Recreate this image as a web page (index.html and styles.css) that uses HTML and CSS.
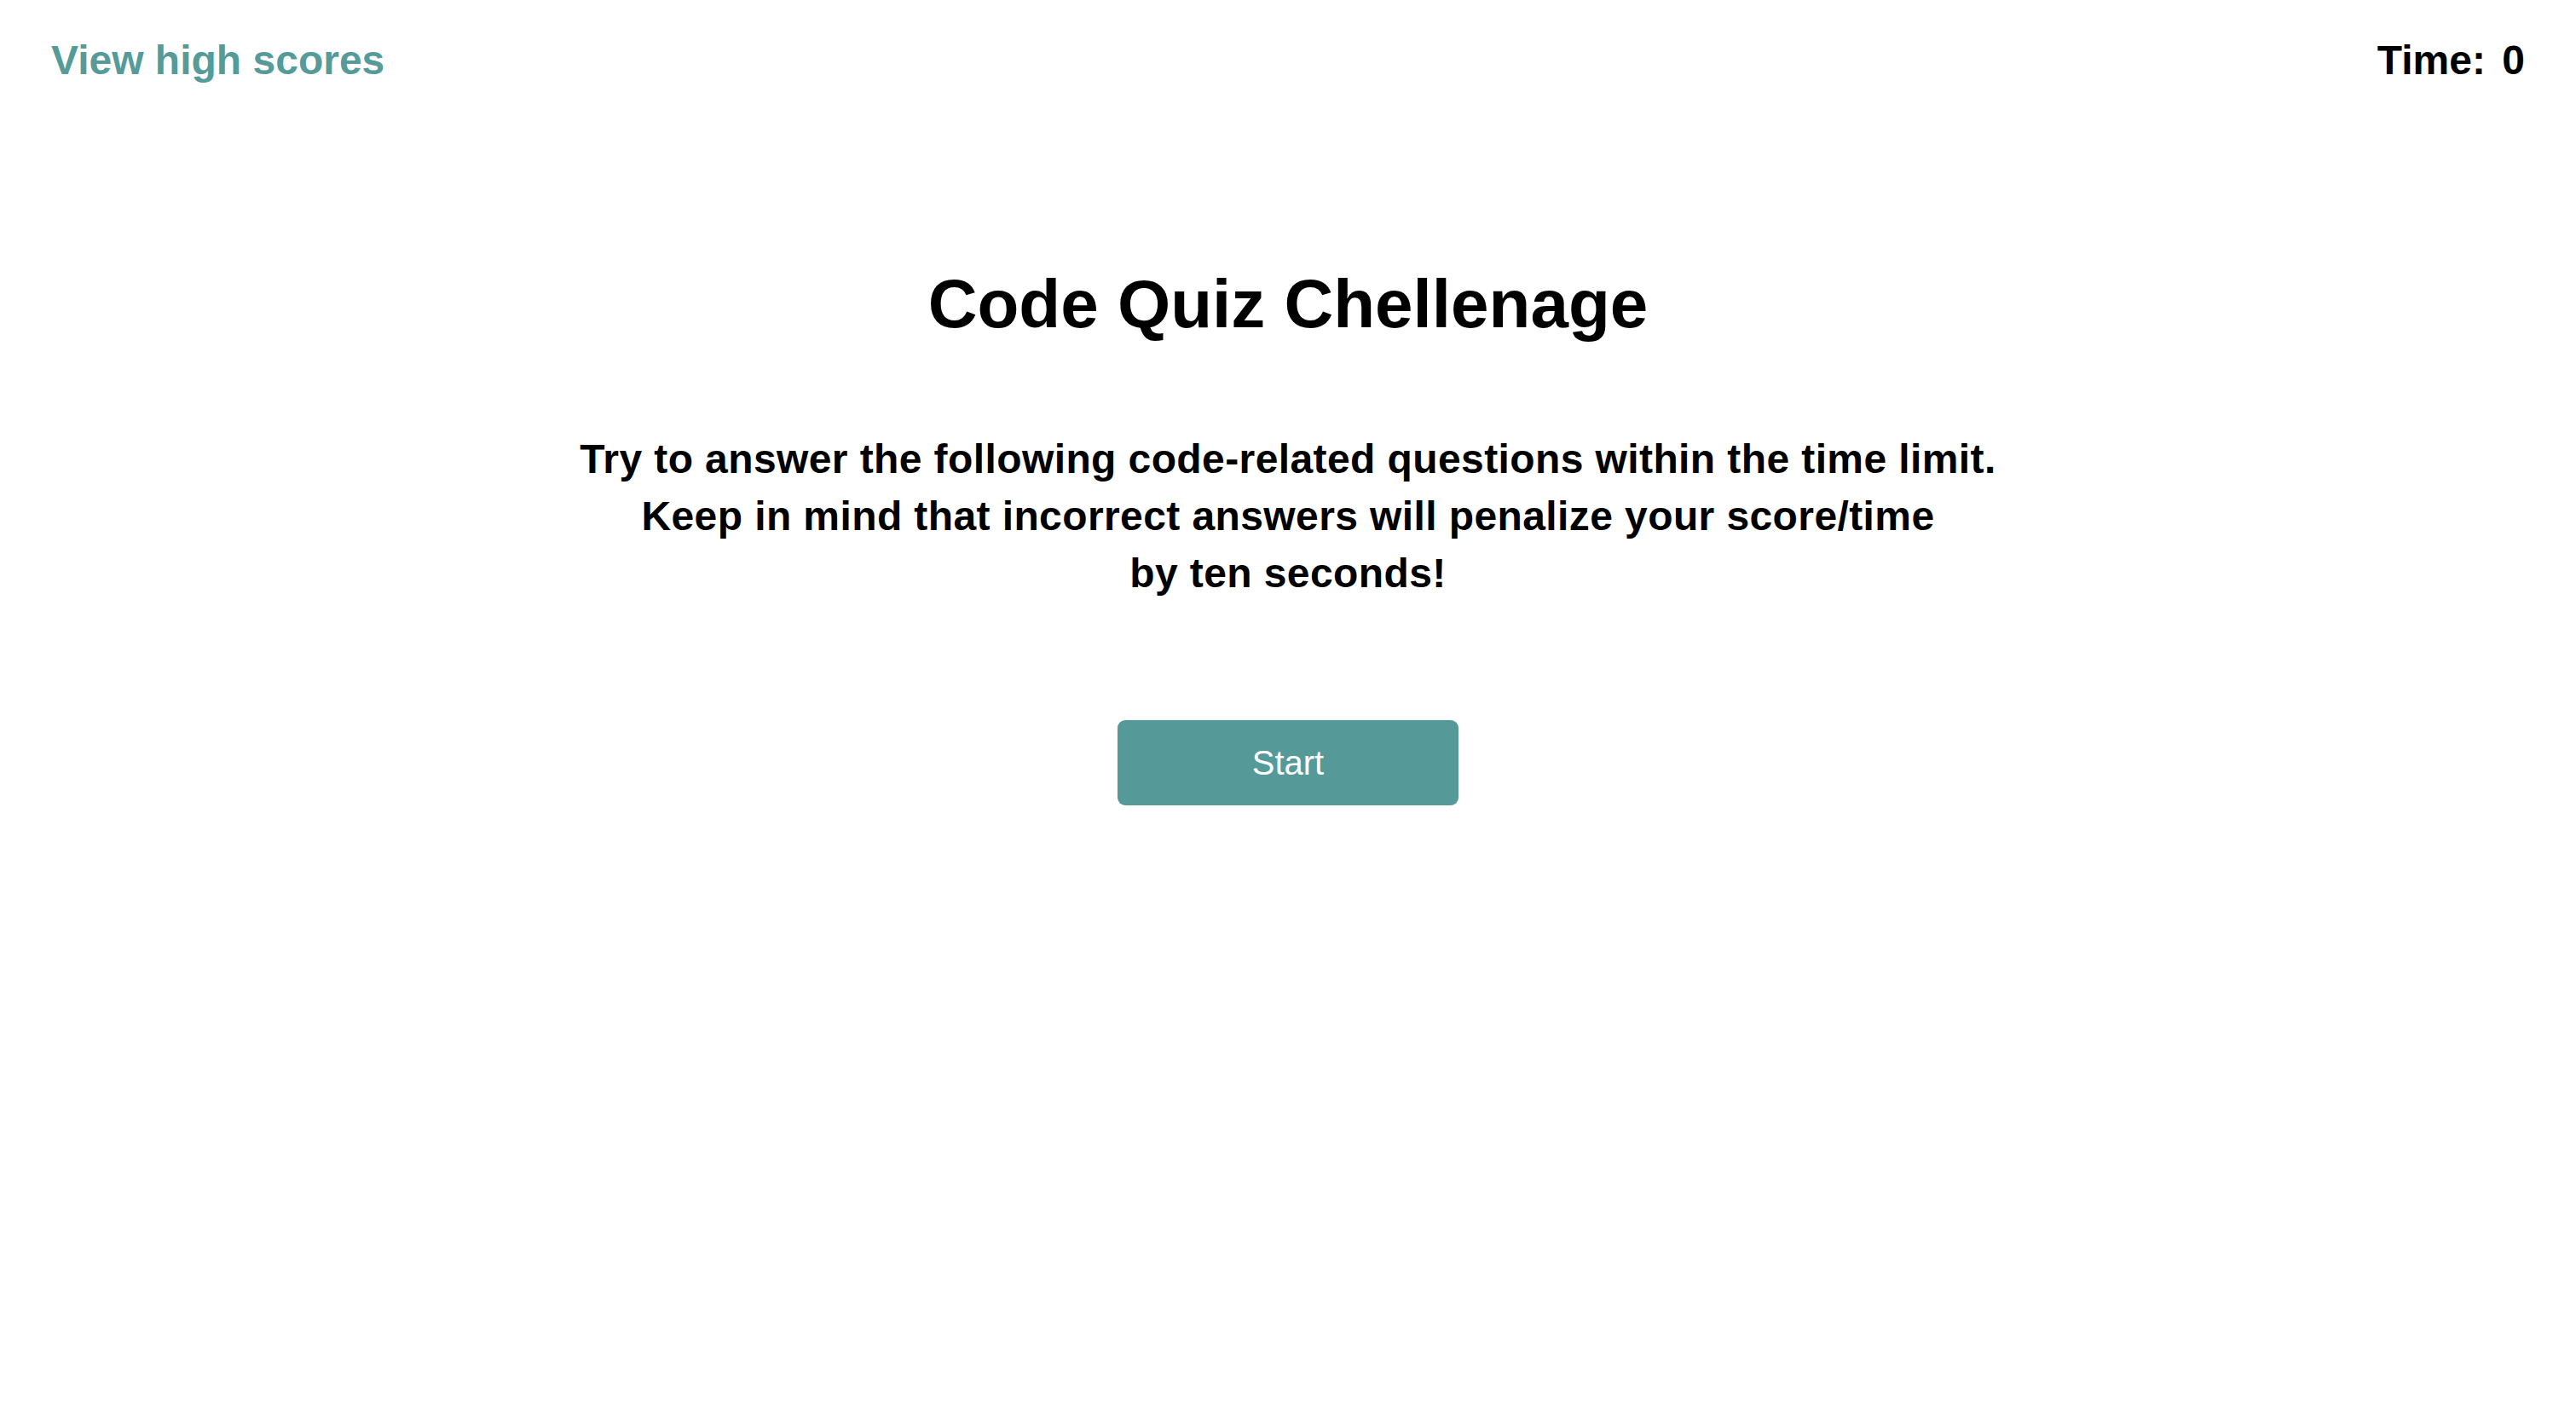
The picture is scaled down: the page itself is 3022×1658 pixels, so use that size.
FILE: index.html
```html
<!DOCTYPE html>
<html lang="en">
<head>
<meta charset="utf-8">
<title>Code Quiz</title>
<link rel="stylesheet" href="styles.css">
</head>
<body>
<header class="topbar">
  <a class="highscores" href="#">View high scores</a>
  <div class="timer">Time: <span class="time-value">0</span></div>
</header>
<main class="intro">
  <h1 class="title">Code Quiz Chellenage</h1>
  <p class="description">Try to answer the following code-related questions within the time limit.<br>Keep in mind that incorrect answers will penalize your score/time<br>by ten seconds!</p>
  <button class="start-btn" type="button">Start</button>
</main>
</body>
</html>
```

FILE: styles.css
```css
html, body {
  margin: 0;
  padding: 0;
  background: #ffffff;
}

body {
  font-family: "Liberation Sans", Arial, Helvetica, sans-serif;
  color: #000000;
}

.topbar {
  display: flex;
  justify-content: space-between;
  align-items: flex-start;
  padding: 37px 60px 0 60px;
  font-size: 48px;
  font-weight: 700;
  line-height: 1.4;
}

.highscores {
  color: #559b9a;
  text-decoration: none;
}

.timer {
  color: #000000;
  word-spacing: 6px;
}

.intro {
  display: flex;
  flex-direction: column;
  align-items: center;
  text-align: center;
}

.title {
  margin: 205px 0 0 0;
  font-size: 80px;
  font-weight: 700;
  line-height: 96px;
}

.description {
  margin: 101px 0 0 0;
  font-size: 48px;
  font-weight: 700;
  line-height: 66.7px;
  letter-spacing: 0.4px;
}

.start-btn {
  margin-top: 139px;
  width: 400px;
  height: 100px;
  border: none;
  border-radius: 9px;
  background: #559a99;
  color: #ffffff;
  font-family: "Liberation Sans", Arial, Helvetica, sans-serif;
  font-size: 40px;
  font-weight: 400;
  padding: 0;
  cursor: pointer;
}
```
